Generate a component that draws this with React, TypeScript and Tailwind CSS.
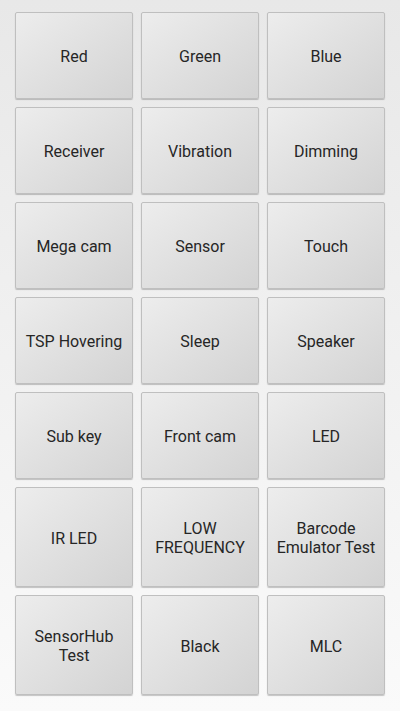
const rows: { labels: string[]; tall?: boolean }[] = [
  { labels: ['Red', 'Green', 'Blue'] },
  { labels: ['Receiver', 'Vibration', 'Dimming'] },
  { labels: ['Mega cam', 'Sensor', 'Touch'] },
  { labels: ['TSP Hovering', 'Sleep', 'Speaker'] },
  { labels: ['Sub key', 'Front cam', 'LED'] },
  { labels: ['IR LED', 'LOW FREQUENCY', 'Barcode Emulator Test'], tall: true },
  { labels: ['SensorHub Test', 'Black', 'MLC'], tall: true },
];

function TestButton({ label, tall }: { label: string; tall?: boolean }) {
  return (
    <button
      type="button"
      className={`flex items-center justify-center rounded-[2px] border border-[#bfbfbf] bg-gradient-to-br from-[#ededed] to-[#d3d3d3] px-1 pt-[2px] text-center text-[16px] leading-[19px] text-[#262626] shadow-[0_1px_1px_rgba(0,0,0,0.22)] ${tall ? 'h-[100px]' : 'h-[87px]'}`}
      style={{ fontFamily: 'Roboto, "Liberation Sans", sans-serif' }}
    >
      {label}
    </button>
  );
}

export default function App() {
  return (
    <div className="min-h-[711px] w-[400px] bg-gradient-to-b from-[#e8e8e8] to-[#fafafa] px-[15px] pt-[12px]">
      <div className="flex flex-col gap-[8px]">
        {rows.map((r, i) => (
          <div key={i} className="grid grid-cols-3 gap-[8px]">
            {r.labels.map((l) => (
              <TestButton key={l} label={l} tall={r.tall} />
            ))}
          </div>
        ))}
      </div>
    </div>
  );
}
